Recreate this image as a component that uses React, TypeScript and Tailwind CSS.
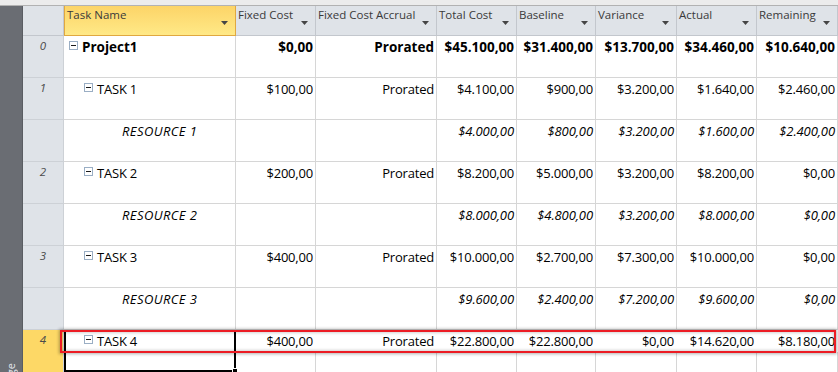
import React from "react";

type Row = {
  num: string;
  kind: "project" | "task" | "resource";
  name: string;
  vals: string[];
};

const rows: Row[] = [
  { num: "0", kind: "project", name: "Project1", vals: ["$0,00", "Prorated", "$45.100,00", "$31.400,00", "$13.700,00", "$34.460,00", "$10.640,00"] },
  { num: "1", kind: "task", name: "TASK 1", vals: ["$100,00", "Prorated", "$4.100,00", "$900,00", "$3.200,00", "$1.640,00", "$2.460,00"] },
  { num: "", kind: "resource", name: "RESOURCE 1", vals: ["", "", "$4.000,00", "$800,00", "$3.200,00", "$1.600,00", "$2.400,00"] },
  { num: "2", kind: "task", name: "TASK 2", vals: ["$200,00", "Prorated", "$8.200,00", "$5.000,00", "$3.200,00", "$8.200,00", "$0,00"] },
  { num: "", kind: "resource", name: "RESOURCE 2", vals: ["", "", "$8.000,00", "$4.800,00", "$3.200,00", "$8.000,00", "$0,00"] },
  { num: "3", kind: "task", name: "TASK 3", vals: ["$400,00", "Prorated", "$10.000,00", "$2.700,00", "$7.300,00", "$10.000,00", "$0,00"] },
  { num: "", kind: "resource", name: "RESOURCE 3", vals: ["", "", "$9.600,00", "$2.400,00", "$7.200,00", "$9.600,00", "$0,00"] },
];

const lastRow: Row = { num: "4", kind: "task", name: "TASK 4", vals: ["$400,00", "Prorated", "$22.800,00", "$22.800,00", "$0,00", "$14.620,00", "$8.180,00"] };

const headers = ["Fixed Cost", "Fixed Cost Accrual", "Total Cost", "Baseline", "Variance", "Actual", "Remaining"];

function Arrow() {
  return (
    <svg width="7" height="4" viewBox="0 0 7 4" className="shrink-0 mt-[14px] mr-[7px]">
      <polygon points="0,0 7,0 3.5,4" fill="#454545" />
    </svg>
  );
}

function Expander() {
  return (
    <span className="shrink-0 mt-[3px] w-[9px] h-[9px] border border-[#9aaec4] bg-white flex items-center justify-center">
      <span className="block w-[5px] h-[1px] bg-[#1a1a1a]" />
    </span>
  );
}

function NameContent({ row }: { row: Row }) {
  if (row.kind === "project") {
    return (
      <div className="flex items-start gap-[4px] pl-[5px] pt-[2px]">
        <Expander />
        <span className="font-bold text-[13.5px] leading-[18px] text-black">{row.name}</span>
      </div>
    );
  }
  if (row.kind === "task") {
    return (
      <div className="flex items-start gap-[4px] pl-[20px] pt-[2px]">
        <Expander />
        <span className="text-[13px] leading-[18px] tracking-[-0.2px] text-black">{row.name}</span>
      </div>
    );
  }
  return (
    <div className="pl-[58px] pt-[2px] italic text-[13px] leading-[18px] tracking-[0.4px] text-black">{row.name}</div>
  );
}

function valueClass(row: Row) {
  if (row.kind === "project") return "font-bold text-[13.5px] leading-[18px]";
  if (row.kind === "resource") return "italic text-[13px] leading-[18px] tracking-[-0.1px]";
  return "text-[13px] leading-[18px] tracking-[-0.2px]";
}

export default function App() {
  return (
    <div className="w-[838px] h-[372px] overflow-hidden flex flex-col bg-white font-['Open_Sans',sans-serif] text-black">
      <div className="h-[6px] shrink-0 bg-[#ececec] border-b border-[#b2b2b2]" />
      <div className="flex flex-1 relative">
        <div className="w-[23px] shrink-0 bg-[#6a6d73] border-r border-[#5a5d62] relative overflow-hidden">
          <div className="absolute left-[5px] bottom-[-49px] [writing-mode:vertical-rl] rotate-180 text-[11px] leading-[12px] text-[#e4e8ee] whitespace-nowrap">
            Task Usage
          </div>
        </div>
        <div className="flex-1 grid grid-cols-[41px_172px_80px_121px_80px_79px_81px_80px_81px] auto-rows-min">
          {/* header */}
          <div className="h-[30px] bg-[#dfe3e8] border-b border-r border-[#c3c7cd]" />
          <div className="h-[30px] flex items-start justify-between bg-gradient-to-b from-[#fcd467] to-[#ffe987] border-b border-x border-[#e0a840] pl-[2px] pt-[1px]">
            <span className="text-[11.5px] leading-[16px] text-[#3a3a3a]">Task Name</span>
            <Arrow />
          </div>
          {headers.map((h) => (
            <div key={h} className="h-[30px] flex items-start justify-between bg-[#dfe3e8] border-b border-r border-[#c3c7cd] pl-[2px] pt-[1px]">
              <span className="text-[11.5px] leading-[16px] text-[#3a3a3a] whitespace-nowrap">{h}</span>
              <Arrow />
            </div>
          ))}

          {rows.map((row, i) => (
            <React.Fragment key={i}>
              <div className="h-[42px] bg-[#dfe3e8] border-b border-r border-[#cdd1d6] text-center italic text-[11.5px] leading-[16px] text-[#4a4a4a] pt-[2px]">
                {row.num}
              </div>
              <div className="h-[42px] border-b border-r border-[#d6d6d6]">
                <NameContent row={row} />
              </div>
              {row.vals.map((v, j) => (
                <div key={j} className={`h-[42px] border-b border-r border-[#d6d6d6] text-right pr-[2px] pt-[2px] whitespace-nowrap ${valueClass(row)}`}>
                  {v}
                </div>
              ))}
            </React.Fragment>
          ))}

          {/* last row, selected */}
          <div className="h-[42px] bg-[#fdd866] border-r border-[#cdd1d6] text-center italic text-[11.5px] leading-[16px] text-[#4a4a4a] pt-[2px]">
            {lastRow.num}
          </div>
          <div className="h-[42px] border-2 border-black relative">
            <div className="flex items-start gap-[4px] pl-[18px]">
              <Expander />
              <span className="text-[13px] leading-[18px] tracking-[-0.2px] text-black">{lastRow.name}</span>
            </div>
            <span className="absolute right-[-4px] bottom-[-4px] w-[6px] h-[6px] bg-black border border-white" />
          </div>
          {lastRow.vals.map((v, j) => (
            <div key={j} className="h-[42px] flex flex-col">
              <div className="h-[22px] text-right pr-[3px] pt-[2px] whitespace-nowrap text-[13px] leading-[18px] tracking-[-0.2px]">{v}</div>
              <div className="flex-1 border-r border-[#d6d6d6]" />
            </div>
          ))}
        </div>
        {/* red annotation rectangle */}
        <div className="absolute left-[60px] top-[324px] w-[776px] h-[23px] border-2 border-[#ec1c24] pointer-events-none shadow-[0_0_3px_1px_rgba(0,0,0,0.3),inset_0_0_3px_1px_rgba(0,0,0,0.18)]" />
      </div>
    </div>
  );
}
